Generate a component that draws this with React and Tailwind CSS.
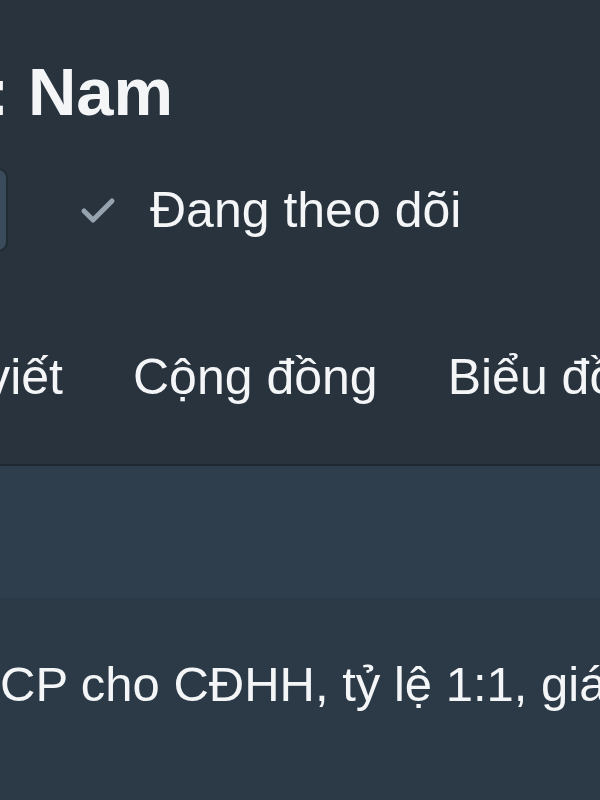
import React from "react";

function Check() {
  return (
    <svg width="36" height="30" viewBox="0 0 36 30" fill="none">
      <path d="M4 16 L13 25 L32 6" stroke="#95a3ae" strokeWidth="5" strokeLinecap="round" strokeLinejoin="round" />
    </svg>
  );
}

export default function App() {
  return (
    <div className="w-[600px] h-[800px] overflow-hidden bg-[#28333e] text-[#f3f5f7] font-['Liberation_Sans',Arial,sans-serif]">
      <div className="h-[466px] flex flex-col border-b-2 border-[#1f2830]">
        <h1 className="mt-[58px] -ml-[13px] whitespace-nowrap text-[67px] leading-none font-bold">
          : Nam
        </h1>

        <div className="mt-[43px] h-[84px] flex items-center">
          <button className="-ml-[40px] w-[48px] h-[84px] rounded-[10px] bg-[#3a4b5b] border-2 border-[#202b34]" />
          <div className="ml-[72px] flex items-center gap-[34px]">
            <Check />
            <span className="text-[50px] leading-none whitespace-nowrap">Đang theo dõi</span>
          </div>
        </div>

        <nav className="mt-[100px] -ml-[101px] flex gap-[70px] whitespace-nowrap text-[50px] leading-none">
          <span>Bài viết</span>
          <span>Cộng đồng</span>
          <span>Biểu đồ</span>
        </nav>
      </div>

      <section className="h-[132px] bg-[#2f3e4c]" />

      <div className="bg-[#2c3a48] h-[202px] pt-[62px]">
        <p className="text-[49px] leading-none whitespace-nowrap">
          CP cho CĐHH, tỷ lệ 1:1, giá 10.000 đồng
        </p>
      </div>
    </div>
  );
}
